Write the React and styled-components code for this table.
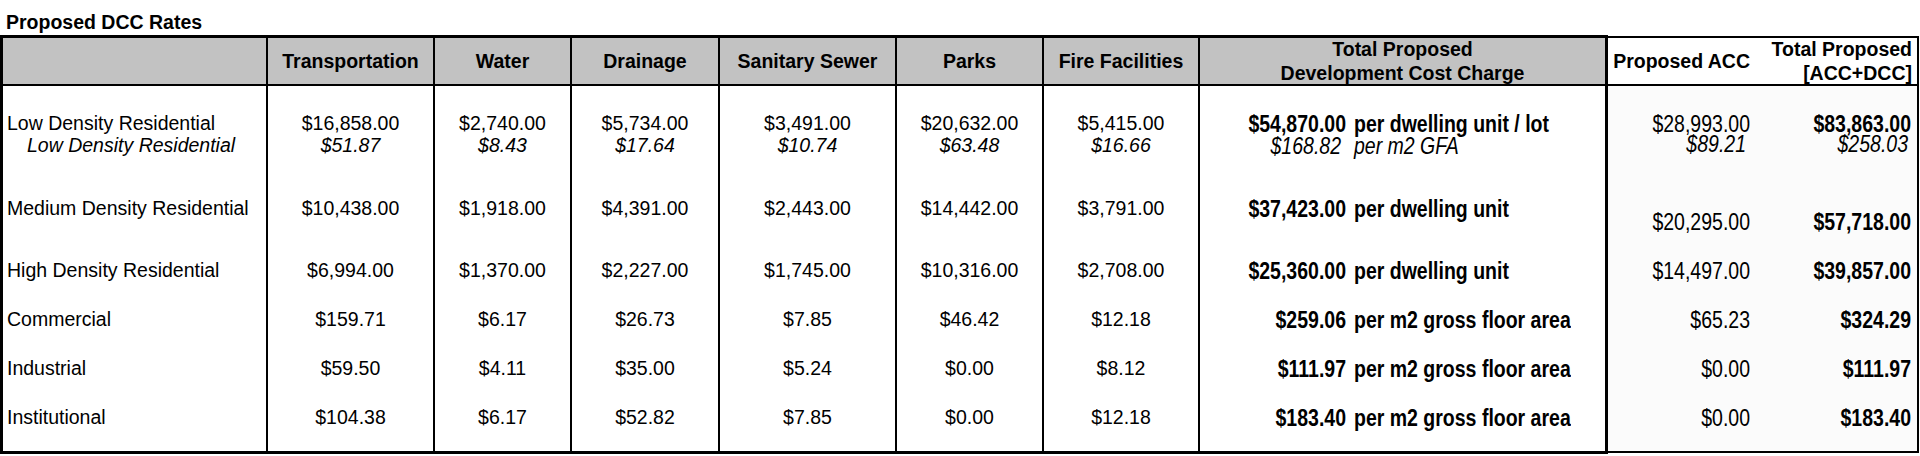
import React from 'react';
import styled, { createGlobalStyle } from 'styled-components';

const Global = createGlobalStyle`
  html, body { margin: 0; padding: 0; background: #fff; }
  body { font-family: "Liberation Sans", Arial, sans-serif; color: #000; }
`;

const ROWS = '48px 97.5px 62px 49px 49px 49px 58.5px';

const Page = styled.div`
  width: 1920px;
  height: 456px;
  overflow: hidden;
`;

const Title = styled.h1`
  margin: 0;
  padding: 10px 0 0 6px;
  height: 25px;
  font-size: 19.5px;
  line-height: 25px;
  font-weight: 700;
`;

const Tables = styled.div`
  display: flex;
  align-items: flex-start;
`;

const DccTable = styled.div`
  flex: none;
  display: grid;
  grid-template-columns: 263px 167px 137px 148px 177px 147px 156px 407px;
  grid-template-rows: ${ROWS};
  border: 3px solid #000;
`;

const AccTable = styled.div`
  flex: none;
  display: grid;
  grid-template-columns: 146px 163px;
  grid-template-rows: ${ROWS};
  border: 2px solid #000;
  border-left: none;
  margin-top: 1px;
  background: #fbfbfb;
`;

const HeadCell = styled.div`
  box-sizing: border-box;
  display: flex;
  align-items: center;
  justify-content: ${p => (p.$right ? 'flex-end' : 'center')};
  text-align: ${p => (p.$right ? 'right' : 'center')};
  padding-right: ${p => p.$padRight || 0}px;
  background: ${p => (p.$plain ? '#fff' : '#c2c2c2')};
  border-bottom: 2px solid #000;
  border-left: ${p => (p.$first ? 'none' : '2px solid #000')};
  font-weight: 700;
  font-size: 19.5px;
  line-height: 24px;
`;

const BodyCell = styled.div`
  box-sizing: border-box;
  border-left: ${p => (p.$first ? 'none' : '2px solid #000')};
  padding-top: ${p => p.$top}px;
  font-size: 19.5px;
  line-height: 22px;
  white-space: nowrap;
`;

const LabelCell = styled(BodyCell)`
  padding-left: 4px;
  text-align: left;
`;

const ValueCell = styled(BodyCell)`
  text-align: center;
`;

const ChargeCell = styled(BodyCell)`
  display: grid;
  grid-template-columns: 146px 1fr;
  column-gap: 8px;
  align-content: start;
`;

const AccCell = styled(BodyCell)`
  text-align: right;
  padding-right: ${p => p.$padRight}px;
`;

const Line = styled.div`
  font-style: ${p => (p.$italic ? 'italic' : 'normal')};
  padding-left: ${p => p.$indent || 0}px;
`;

/* condensed, tall lettering (Arial Narrow look) */
const TallLine = styled.div`
  height: 18px;
  margin: 2px 0;
  line-height: 18px;
  transform: scaleY(1.22);
  font-weight: ${p => (p.$bold ? 700 : 400)};
  font-style: ${p => (p.$italic ? 'italic' : 'normal')};
  padding-right: ${p => p.$inset || 0}px;
`;

const Amount = styled(TallLine)`
  text-align: right;
`;

const Unit = styled(TallLine)`
  text-align: left;
`;

const HEADERS = ['Transportation', 'Water', 'Drainage', 'Sanitary Sewer', 'Parks', 'Fire Facilities'];
const GFA = 'per m2 gross floor area';

const DATA = [
  {
    label: 'Low Density Residential',
    sub: 'Low Density Residential',
    vals: ['$16,858.00', '$2,740.00', '$5,734.00', '$3,491.00', '$20,632.00', '$5,415.00'],
    subVals: ['$51.87', '$8.43', '$17.64', '$10.74', '$63.48', '$16.66'],
    total: '$54,870.00', unit: 'per dwelling unit / lot',
    subTotal: '$168.82', subUnit: 'per m2 GFA',
    acc: '$28,993.00', subAcc: '$89.21',
    sum: '$83,863.00', subSum: '$258.03',
    top: 25.5,
  },
  {
    label: 'Medium Density Residential',
    vals: ['$10,438.00', '$1,918.00', '$4,391.00', '$2,443.00', '$14,442.00', '$3,791.00'],
    total: '$37,423.00', unit: 'per dwelling unit',
    acc: '$20,295.00', sum: '$57,718.00',
    top: 13.5, accTop: 26.5,
  },
  {
    label: 'High Density Residential',
    vals: ['$6,994.00', '$1,370.00', '$2,227.00', '$1,745.00', '$10,316.00', '$2,708.00'],
    total: '$25,360.00', unit: 'per dwelling unit',
    acc: '$14,497.00', sum: '$39,857.00',
    top: 13.5,
  },
  {
    label: 'Commercial',
    vals: ['$159.71', '$6.17', '$26.73', '$7.85', '$46.42', '$12.18'],
    total: '$259.06', unit: GFA, acc: '$65.23', sum: '$324.29', top: 13.5,
  },
  {
    label: 'Industrial',
    vals: ['$59.50', '$4.11', '$35.00', '$5.24', '$0.00', '$8.12'],
    total: '$111.97', unit: GFA, acc: '$0.00', sum: '$111.97', top: 13.5,
  },
  {
    label: 'Institutional',
    vals: ['$104.38', '$6.17', '$52.82', '$7.85', '$0.00', '$12.18'],
    total: '$183.40', unit: GFA, acc: '$0.00', sum: '$183.40', top: 13.5,
  },
];

export default function App() {
  return (
    <Page>
      <Global />
      <Title>Proposed DCC Rates</Title>
      <Tables>
        <DccTable>
          <HeadCell $first />
          {HEADERS.map(h => (
            <HeadCell key={h}>{h}</HeadCell>
          ))}
          <HeadCell>
            Total Proposed
            <br />
            Development Cost Charge
          </HeadCell>
          {DATA.map(r => (
            <React.Fragment key={r.label}>
              <LabelCell $first $top={r.top}>
                <Line>{r.label}</Line>
                {r.sub && <Line $italic $indent={20}>{r.sub}</Line>}
              </LabelCell>
              {r.vals.map((v, i) => (
                <ValueCell key={i} $top={r.top}>
                  <Line>{v}</Line>
                  {r.subVals && <Line $italic>{r.subVals[i]}</Line>}
                </ValueCell>
              ))}
              <ChargeCell $top={r.top}>
                <Amount $bold>{r.total}</Amount>
                <Unit $bold>{r.unit}</Unit>
                {r.subTotal && <Amount $italic $inset={5}>{r.subTotal}</Amount>}
                {r.subUnit && <Unit $italic>{r.subUnit}</Unit>}
              </ChargeCell>
            </React.Fragment>
          ))}
        </DccTable>
        <AccTable>
          <HeadCell $first $plain $right $padRight={4}>Proposed ACC</HeadCell>
          <HeadCell $first $plain $right $padRight={5}>
            Total Proposed
            <br />
            [ACC+DCC]
          </HeadCell>
          {DATA.map(r => (
            <React.Fragment key={r.label}>
              <AccCell $first $top={r.accTop || r.top} $padRight={4}>
                <TallLine>{r.acc}</TallLine>
                {r.subAcc && <TallLine $italic $inset={4}>{r.subAcc}</TallLine>}
              </AccCell>
              <AccCell $first $top={r.accTop || r.top} $padRight={6}>
                <TallLine $bold>{r.sum}</TallLine>
                {r.subSum && <TallLine $italic $inset={3}>{r.subSum}</TallLine>}
              </AccCell>
            </React.Fragment>
          ))}
        </AccTable>
      </Tables>
    </Page>
  );
}
